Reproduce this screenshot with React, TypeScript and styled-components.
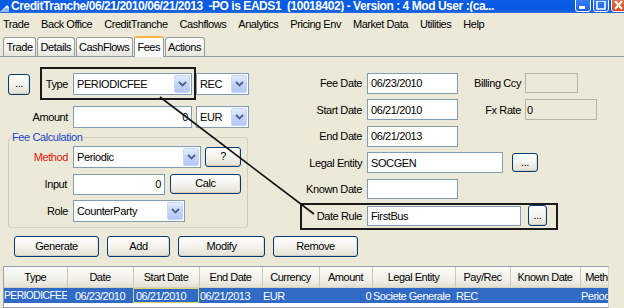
import React from 'react';
import styled, { createGlobalStyle, css } from 'styled-components';

const GlobalStyle = createGlobalStyle`
  html, body {
    margin: 0;
    padding: 0;
    background: #ece9d8;
  }
`;

const Window = styled.div`
  position: relative;
  width: 624px;
  height: 308px;
  overflow: hidden;
  background: #ece9d8;
  font-family: 'Liberation Sans', Arial, sans-serif;
  font-size: 11px;
  letter-spacing: -0.4px;
  color: #000;
  display: flex;
  flex-direction: column;
`;

const TitleBar = styled.div`
  flex: none;
  height: 13px;
  display: flex;
  align-items: flex-end;
  overflow: hidden;
  background: linear-gradient(#0b5fe4, #0457e2 70%, #2b6cdc);
  color: #fff;
`;

const TitleText = styled.span`
  flex: 1;
  padding-left: 2px;
  font-size: 12px;
  font-weight: bold;
  line-height: 12px;
  letter-spacing: -0.45px;
  white-space: pre;
  overflow: hidden;
  align-self: flex-start;
`;

const WinButtons = styled.div`
  display: flex;
  gap: 2px;
  margin-bottom: 1px;
  margin-right: -3px;
`;

const WinButton = styled.span<{ $close?: boolean }>`
  width: 16px;
  height: 16px;
  box-sizing: border-box;
  border: 1px solid #fff;
  border-radius: 3px;
  background: ${(p) =>
    p.$close
      ? 'linear-gradient(#e9805c, #d7471c)'
      : 'linear-gradient(#3d86f5, #1f62e8)'};
  display: flex;
  align-items: flex-end;
  justify-content: center;
`;

const MenuBar = styled.div`
  flex: none;
  height: 22px;
  display: flex;
  align-items: center;
  gap: 12px;
  padding-left: 3px;
  letter-spacing: -0.45px;
`;

const TabStrip = styled.div`
  flex: none;
  height: 21px;
  display: flex;
  align-items: flex-end;
  padding-left: 3px;
  border-bottom: 1px solid #919b9c;
  letter-spacing: -0.45px;
`;

const Tab = styled.div<{ $active?: boolean }>`
  height: 19px;
  line-height: 18px;
  box-sizing: border-box;
  padding: 0 2.5px;
  margin-right: 1px;
  border: 1px solid #919b9c;
  border-bottom: none;
  border-radius: 3px 3px 0 0;
  background: linear-gradient(#ffffff, #f3f3ef 60%, #e6e5dc);
  ${(p) =>
    p.$active &&
    css`
      height: 21px;
      margin-bottom: -1px;
      border-top: 2px solid #f5b445;
      background: #fcfcfe;
      line-height: 19px;
    `}
`;

const Body = styled.div`
  flex: 1;
  display: flex;
  flex-direction: column;
  min-height: 0;
`;

const FormArea = styled.div`
  display: flex;
  align-items: flex-start;
  padding-left: 8px;
`;

const LeftCol = styled.div`
  width: 241px;
  padding-top: 16px;
  display: flex;
  flex-direction: column;
`;

const RightCol = styled.div`
  margin-left: 51px;
  padding-top: 15px;
  display: flex;
  flex-direction: column;
  gap: 4.6px;
`;

const Row = styled.div<{ $gap?: number; $mb?: number }>`
  height: 22px;
  display: flex;
  align-items: center;
  gap: ${(p) => p.$gap ?? 4}px;
  margin-bottom: ${(p) => p.$mb ?? 0}px;
`;

const Label = styled.span<{ $w: number; $color?: string }>`
  width: ${(p) => p.$w}px;
  flex: none;
  display: flex;
  align-items: center;
  justify-content: flex-end;
  margin-right: 1px;
  color: ${(p) => p.$color ?? '#000'};
  white-space: nowrap;
`;

const SplitLabel = styled(Label)`
  justify-content: space-between;
`;

const SubLabel = styled.span`
  width: 59px;
  text-align: right;
  white-space: nowrap;
`;

const fieldBox = css`
  box-sizing: border-box;
  flex: none;
  height: 21px;
  border: 1px solid #7f9db9;
  background: #fff;
  display: flex;
  align-items: center;
`;

const SelectBox = styled.div<{ $w: number }>`
  ${fieldBox};
  width: ${(p) => p.$w}px;
  height: 22px;
  padding: 1px;
`;

const SelectText = styled.span`
  flex: 1;
  padding-left: 2px;
  white-space: nowrap;
  overflow: hidden;
`;

const ArrowBtn = styled.span`
  width: 16px;
  align-self: stretch;
  box-sizing: border-box;
  border: 1px solid #c6d5fb;
  border-radius: 2px;
  background: linear-gradient(#e3ebfe, #c1d3fb 55%, #b2c8f7);
  display: flex;
  align-items: center;
  justify-content: center;
`;

const TextBox = styled.div<{ $w: number; $h?: number; $right?: boolean; $disabled?: boolean }>`
  ${fieldBox};
  width: ${(p) => p.$w}px;
  height: ${(p) => p.$h ?? 21}px;
  padding: 0 3px;
  justify-content: ${(p) => (p.$right ? 'flex-end' : 'flex-start')};
  ${(p) =>
    p.$disabled &&
    css`
      background: #ece9d8;
      border-color: #b5b2a4;
      padding-left: 1px;
    `}
`;

const XpButton = styled.button<{ $w: number; $h?: number; $ml?: number }>`
  flex: none;
  width: ${(p) => p.$w}px;
  height: ${(p) => p.$h ?? 21}px;
  margin-left: ${(p) => p.$ml ?? 0}px;
  padding: 0 0 2px;
  box-sizing: border-box;
  border: 1px solid #003c74;
  border-radius: 3px;
  background: linear-gradient(#ffffff, #f5f4ef 45%, #e4e1d4);
  box-shadow: inset 0 -1px 0 #d3cdbf, inset -1px 0 0 #e2ded2;
  font: inherit;
  letter-spacing: inherit;
  color: #000;
`;

const GroupBox = styled.fieldset`
  box-sizing: border-box;
  width: 240px;
  margin: 3px 0 0;
  padding: 3px 6px 5px 0;
  border: 1px solid #d0d0bf;
  border-radius: 3px;
  display: flex;
  flex-direction: column;
  gap: 5px;
  min-width: 0;
`;

const Legend = styled.legend`
  color: #1a45c9;
  padding: 0 1px;
  margin-left: 2px;
  line-height: 12px;
`;

const ButtonRow = styled.div`
  display: flex;
  gap: 8px;
  padding-left: 14px;
  margin-top: 8px;
`;

const GridWrap = styled.div`
  margin: 9px 0 0 3px;
  width: 606px;
  flex: 1;
  box-sizing: border-box;
  border: 1px solid #9a9eae;
  border-right-color: #d8d6ca;
  background: #fff;
  overflow: hidden;
  letter-spacing: -0.5px;
`;

const Grid = styled.table`
  table-layout: fixed;
  border-collapse: collapse;
  width: 620px;
`;

const Th = styled.th`
  height: 20px;
  padding: 0;
  font-weight: normal;
  text-align: center;
  white-space: nowrap;
  overflow: hidden;
  background: linear-gradient(#fbfbf9, #efeee6 70%, #e2e0d3);
  border-right: 1px solid #cbc8b8;
  border-bottom: 1px solid #d4d0c2;
`;

const Td = styled.td<{ $align?: string; $focus?: boolean; $tight?: boolean }>`
  height: 15px;
  padding: 0 1px 0 1px;
  white-space: nowrap;
  overflow: hidden;
  text-align: ${(p) => p.$align ?? 'left'};
  background: #316ac5;
  color: #fff;
  ${(p) =>
    p.$tight &&
    css`
      padding: 0;
      font-size: 10.3px;
      letter-spacing: -0.55px;
    `}
  ${(p) =>
    p.$focus &&
    css`
      box-shadow: inset 0 0 0 1px #d8d46a;
      padding-left: 3px;
    `}
`;

const Overlay = styled.svg`
  position: absolute;
  left: 0;
  top: 0;
  pointer-events: none;
`;

const Chevron = () => (
  <svg width="9" height="6" viewBox="0 0 9 6">
    <path d="M1 1 L4.5 4.5 L8 1" fill="none" stroke="#4d6185" strokeWidth="1.8" />
  </svg>
);

const Select = ({ w, value }: { w: number; value: string }) => (
  <SelectBox $w={w}>
    <SelectText>{value}</SelectText>
    <ArrowBtn>
      <Chevron />
    </ArrowBtn>
  </SelectBox>
);

const menus = [
  'Trade',
  'Back Office',
  'CreditTranche',
  'Cashflows',
  'Analytics',
  'Pricing Env',
  'Market Data',
  'Utilities',
  'Help',
];

const tabs = ['Trade', 'Details', 'CashFlows', 'Fees', 'Actions'];

const columns: { title: string; w: number }[] = [
  { title: 'Type', w: 63 },
  { title: 'Date', w: 66 },
  { title: 'Start Date', w: 66 },
  { title: 'End Date', w: 63 },
  { title: 'Currency', w: 57 },
  { title: 'Amount', w: 53 },
  { title: 'Legal Entity', w: 83 },
  { title: 'Pay/Rec', w: 55 },
  { title: 'Known Date', w: 70 },
  { title: 'Method', w: 44 },
];

const App: React.FC = () => (
  <>
    <GlobalStyle />
    <Window>
      <TitleBar>
        <svg width="9" height="13" viewBox="0 0 9 13" style={{ flex: 'none' }}>
          <path d="M0 12 L7 5 L9 7 L9 12 Z" fill="#dfeaff" />
          <path d="M0 12 L6 8 L9 9 L9 12 Z" fill="#8fb6f5" />
        </svg>
        <TitleText>
          {'CreditTranche/06/21/2010/06/21/2013  -PO is EADS1  (10018402) - Version : 4 Mod User :(ca...'}
        </TitleText>
        <WinButtons>
          <WinButton>
            <svg width="8" height="5">
              <rect x="0" y="0" width="6" height="3" fill="#fff" />
            </svg>
          </WinButton>
          <WinButton>
            <svg width="10" height="10">
              <rect x="1" y="0" width="8" height="8" fill="none" stroke="#fff" strokeWidth="1.5" />
            </svg>
          </WinButton>
          <WinButton $close>
            <svg width="10" height="10">
              <path d="M1 0 L8 8 M8 0 L1 8" stroke="#fff" strokeWidth="2" />
            </svg>
          </WinButton>
        </WinButtons>
      </TitleBar>

      <MenuBar>
        {menus.map((m) => (
          <span key={m}>{m}</span>
        ))}
      </MenuBar>

      <TabStrip>
        {tabs.map((t) => (
          <Tab key={t} $active={t === 'Fees'}>
            {t}
          </Tab>
        ))}
      </TabStrip>

      <Body>
        <FormArea>
          <LeftCol>
            <Row $mb={11}>
              <SplitLabel $w={60}>
                <XpButton $w={22} $h={21}>...</XpButton>
                <span>Type</span>
              </SplitLabel>
              <Select w={119} value="PERIODICFEE" />
              <Select w={53} value="REC" />
            </Row>
            <Row>
              <Label $w={60}>Amount</Label>
              <TextBox $w={119} $h={22} $right>
                0
              </TextBox>
              <Select w={53} value="EUR" />
            </Row>
            <GroupBox>
              <Legend>Fee Calculation</Legend>
              <Row>
                <Label $w={59} $color="#e0150c">
                  Method
                </Label>
                <Select w={128} value="Periodic" />
                <XpButton $w={36} $h={20}>
                  ?
                </XpButton>
              </Row>
              <Row $gap={5}>
                <Label $w={58}>Input</Label>
                <TextBox $w={92} $right>
                  0
                </TextBox>
                <XpButton $w={71} $h={20}>
                  Calc
                </XpButton>
              </Row>
              <Row>
                <Label $w={59}>Role</Label>
                <Select w={112} value="CounterParty" />
              </Row>
            </GroupBox>
          </LeftCol>

          <RightCol>
            <Row>
              <Label $w={62}>Fee Date</Label>
              <TextBox $w={91}>06/23/2010</TextBox>
              <SubLabel>Billing Ccy</SubLabel>
              <TextBox $w={53} $h={20} $disabled />
            </Row>
            <Row>
              <Label $w={62}>Start Date</Label>
              <TextBox $w={91}>06/21/2010</TextBox>
              <SubLabel>Fx Rate</SubLabel>
              <TextBox $w={72} $disabled>
                0
              </TextBox>
            </Row>
            <Row>
              <Label $w={62}>End Date</Label>
              <TextBox $w={91}>06/21/2013</TextBox>
            </Row>
            <Row>
              <Label $w={62}>Legal Entity</Label>
              <TextBox $w={136}>SOCGEN</TextBox>
              <XpButton $w={26} $h={19} $ml={5}>
                ...
              </XpButton>
            </Row>
            <Row>
              <Label $w={62}>Known Date</Label>
              <TextBox $w={91} $h={20} />
            </Row>
            <Row>
              <Label $w={62}>Date Rule</Label>
              <TextBox $w={154} $h={20}>
                FirstBus
              </TextBox>
              <XpButton $w={19} $h={21} $ml={3}>
                ...
              </XpButton>
            </Row>
          </RightCol>
        </FormArea>

        <ButtonRow>
          <XpButton $w={85}>Generate</XpButton>
          <XpButton $w={63}>Add</XpButton>
          <XpButton $w={87}>Modify</XpButton>
          <XpButton $w={85}>Remove</XpButton>
        </ButtonRow>

        <GridWrap>
          <Grid>
            <colgroup>
              {columns.map((c) => (
                <col key={c.title} style={{ width: c.w }} />
              ))}
            </colgroup>
            <thead>
              <tr>
                {columns.map((c) => (
                  <Th key={c.title}>{c.title}</Th>
                ))}
              </tr>
            </thead>
            <tbody>
              <tr>
                <Td $tight>PERIODICFEE</Td>
                <Td $align="center">06/23/2010</Td>
                <Td $focus>06/21/2010</Td>
                <Td>06/21/2013</Td>
                <Td>EUR</Td>
                <Td $align="right">0</Td>
                <Td>Societe Generale</Td>
                <Td>REC</Td>
                <Td />
                <Td>Periodic</Td>
              </tr>
            </tbody>
          </Grid>
        </GridWrap>
      </Body>

      <Overlay width="624" height="308" viewBox="0 0 624 308">
        <rect x="41" y="68" width="154" height="31" fill="none" stroke="#1b1b1b" strokeWidth="2" />
        <rect x="301" y="204" width="256" height="25" fill="none" stroke="#1b1b1b" strokeWidth="2" />
        <line x1="160" y1="97" x2="314" y2="214" stroke="#111" strokeWidth="1.6" />
      </Overlay>
    </Window>
  </>
);

export default App;
